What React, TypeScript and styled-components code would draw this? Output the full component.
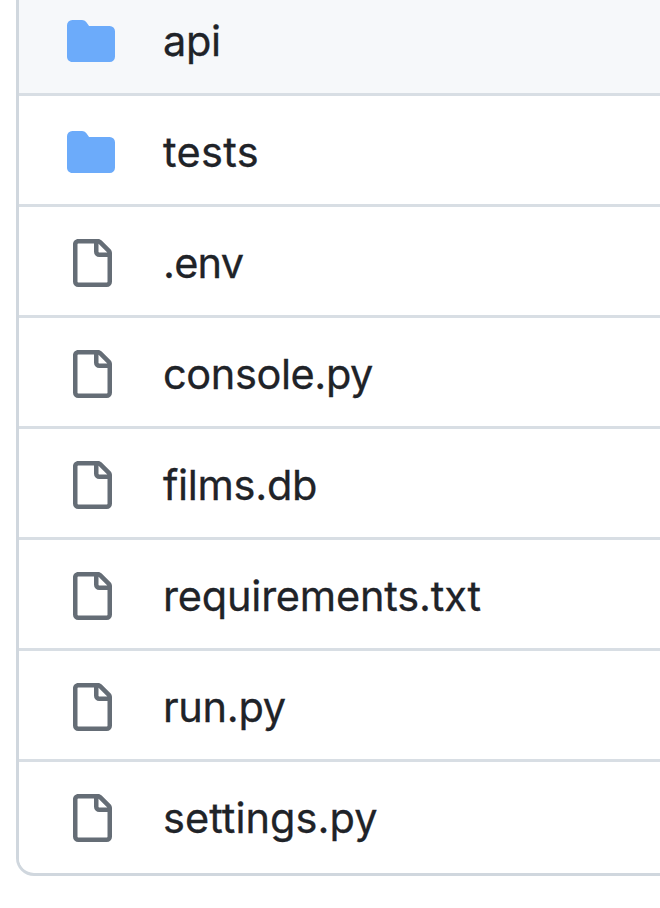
import React from "react";
import styled, { createGlobalStyle } from "styled-components";

const Global = createGlobalStyle`
  * { box-sizing: border-box; }
  body { margin: 0; background: #fff; overflow: hidden; }
`;

const Page = styled.main`
  height: 908px;
  padding-left: 16px;
  overflow: hidden;
`;

const FileList = styled.ul`
  list-style: none;
  margin: 0;
  padding: 0;
  width: 700px;
  height: 876px;
  border: 3px solid #d0d7de;
  border-top: 0;
  border-radius: 0 0 0 18px;
  overflow: hidden;
`;

const Row = styled.li<{ $first?: boolean }>`
  display: flex;
  align-items: center;
  height: ${(p) => (p.$first ? 93 : 111)}px;
  padding: ${(p) => (p.$first ? "0 0 11px 48px" : "4px 0 0 48px")};
  border-top: ${(p) => (p.$first ? "0" : "3px solid #d8dee4")};
  background: ${(p) => (p.$first ? "#f6f8fa" : "#fff")};
`;

const Icon = styled.svg`
  display: block;
  flex: none;
  width: 48px;
  height: 48px;
`;

const Name = styled.span<{ $tracking: number }>`
  margin-left: 48px;
  font: 400 41.5px/60px Inter, sans-serif;
  letter-spacing: ${(p) => p.$tracking}px;
  color: #1f2328;
  -webkit-text-stroke: 0.3px #1f2328;
  white-space: nowrap;
`;

const FolderIcon = () => (
  <Icon viewBox="0 0 16 16" fill="#6cabfa">
    <path d="M1.75 1A1.75 1.75 0 0 0 0 2.75v10.5C0 14.216.784 15 1.75 15h12.5A1.75 1.75 0 0 0 16 13.25v-8.5A1.75 1.75 0 0 0 14.25 3H7.5a.25.25 0 0 1-.2-.1l-.9-1.2C6.07 1.26 5.55 1 5 1H1.75Z" />
  </Icon>
);

const FileIcon = () => (
  <Icon viewBox="0 0 16 16" fill="#656d76">
    <path d="M2 1.75C2 .784 2.784 0 3.75 0h6.586c.464 0 .909.184 1.237.513l2.914 2.914c.329.328.513.773.513 1.237v9.586A1.75 1.75 0 0 1 13.25 16h-9.5A1.75 1.75 0 0 1 2 14.25Zm1.75-.25a.25.25 0 0 0-.25.25v12.5c0 .138.112.25.25.25h9.5a.25.25 0 0 0 .25-.25V6h-2.75A1.75 1.75 0 0 1 9 4.25V1.5Zm6.75.062V4.25c0 .138.112.25.25.25h2.688l-.011-.013-2.914-2.914-.013-.011Z" />
  </Icon>
);

const entries = [
  { name: "api", folder: true, tracking: -0.3 },
  { name: "tests", folder: true, tracking: 0.35 },
  { name: ".env", tracking: -0.8 },
  { name: "console.py", tracking: -0.4 },
  { name: "films.db", tracking: -0.3 },
  { name: "requirements.txt", tracking: -0.2 },
  { name: "run.py", tracking: -0.3 },
  { name: "settings.py", tracking: 0.05 },
];

export default function App() {
  return (
    <>
      <Global />
      <Page>
        <FileList>
          {entries.map((e, i) => (
            <Row key={e.name} $first={i === 0}>
              {e.folder ? <FolderIcon /> : <FileIcon />}
              <Name $tracking={e.tracking}>{e.name}</Name>
            </Row>
          ))}
        </FileList>
      </Page>
    </>
  );
}
